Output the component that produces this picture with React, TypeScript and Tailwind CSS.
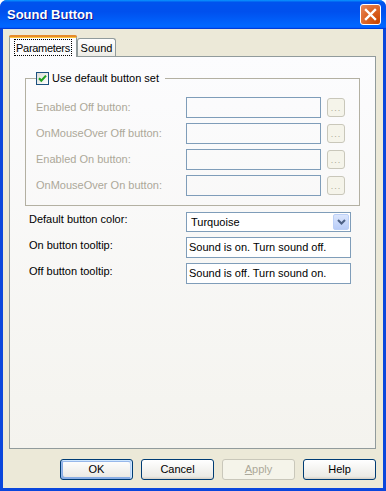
import React from 'react';

const font = "font-['Tahoma','Liberation_Sans',sans-serif]";

function CheckBox() {
  return (
    <span className="inline-flex w-[13px] h-[13px] border border-[#1c5180] bg-[linear-gradient(135deg,#dcdcd7,#ffffff)] items-center justify-center">
      <svg width="11" height="11" viewBox="0 0 11 11">
        <path d="M2 5.2 L4.3 7.6 L9 2.6" fill="none" stroke="#21a121" strokeWidth="2.1" />
      </svg>
    </span>
  );
}

function DisabledRow({ label }: { label: string }) {
  return (
    <>
      <span className="text-[#aca899] self-center leading-[13px]">{label}</span>
      <div className="h-[21px] border border-[#7f9db9]" />
      <div className="mt-[1px] h-[19px] rounded-[3px] border border-[#c9c7ba] bg-[#f5f4ea] flex items-end justify-center pb-[3px]">
        <span className="text-[#aca899] text-[9px] leading-[9px] tracking-[1px]">...</span>
      </div>
    </>
  );
}

function Button({ label, def, disabled }: { label: React.ReactNode; def?: boolean; disabled?: boolean }) {
  let cls = 'w-[73px] h-[21px] rounded-[3px] border flex items-center justify-center ';
  if (disabled) cls += 'border-[#c9c7ba] bg-[#f5f4ea] text-[#aca899]';
  else
    cls +=
      'border-[#003c74] text-black bg-[linear-gradient(180deg,#ffffff,#ecebe6_86%,#d6d0c5)]' +
      (def ? ' shadow-[inset_-1px_1px_#cee7ff,inset_1px_2px_#98b8ea,inset_-2px_2px_#bcd4f6,inset_1px_-1px_#89ade4,inset_2px_-2px_#89ade4]' : '');
  return <div className={cls}>{label}</div>;
}

export default function App() {
  return (
    <div className={`w-[386px] h-[491px] flex flex-col rounded-t-[7px] overflow-hidden bg-[#0a46dc] text-[11px] ${font}`}>
      {/* Title bar */}
      <div className="h-[29px] shrink-0 flex items-center justify-between pl-[7px] pr-[5px] bg-[linear-gradient(180deg,#0997ff,#0053ee_8%,#0050ee_40%,#0066ff_88%,#0066ff_93%,#005bff_95%,#003dd7_96%,#003dd7)]">
        <span className="text-white font-bold text-[13px] pt-[1px] font-['Liberation_Sans',sans-serif] [text-shadow:1px_1px_#0f1089]">
          Sound Button
        </span>
        <div className="w-[21px] h-[21px] rounded-[3px] border border-white bg-[radial-gradient(circle_at_90%_90%,#cc4600,#dc6527_55%,#e88a5f)] flex items-center justify-center">
          <svg width="13" height="13" viewBox="0 0 13 13">
            <path d="M2 2 L11 11 M11 2 L2 11" stroke="#fff" strokeWidth="2.4" strokeLinecap="square" />
          </svg>
        </div>
      </div>

      {/* Client area */}
      <div className="flex-1 mx-[3px] mb-[3px] bg-[#ece9d8] flex flex-col">
        <div className="pt-[6px] pl-[6px] pr-[7px] flex flex-col flex-1">
          {/* Tabs */}
          <div className="flex items-end h-[21px] relative z-10">
            <div className="w-[68px] h-[22px] -mb-px rounded-t-[3px] border-x border-[#919b9c] bg-[#fcfcfe] flex flex-col">
              <div className="h-[2px] -mx-px rounded-t-[3px] bg-[#e68b2c]" />
              <div className="h-px bg-[#ffc73c]" />
              <div className="flex-1 flex items-start justify-center pt-[1px]">
                <span className="border border-dotted border-black px-px tracking-[-0.3px] leading-[14px] h-[17px] flex items-center">
                  Parameters
                </span>
              </div>
            </div>
            <div className="w-[39px] h-[18px] rounded-t-[3px] border border-b-0 border-[#919b9c] bg-[linear-gradient(180deg,#ffffff,#f3f3ef_70%,#ecebe5)] flex items-center justify-center pt-[2px]">
              Sound
            </div>
          </div>

          {/* Panel */}
          <div className="flex-1 border border-[#919b9c] bg-[linear-gradient(180deg,#fcfcfe,#f4f3ee)] flex flex-col pl-[15px]">
            <fieldset className="mt-[15px] w-[335px] border border-[#b3b0a2] pl-[10px] pt-[12px] pb-[9px]">
              <legend className="pr-[6px] flex items-center gap-[3px] h-[13px] leading-[13px] text-black">
                <CheckBox />
                <span>Use default button set</span>
              </legend>
              <div className="grid grid-cols-[144px_135px_18px] gap-x-[6px] gap-y-[5px]">
                <DisabledRow label="Enabled Off button:" />
                <DisabledRow label="OnMouseOver Off button:" />
                <DisabledRow label="Enabled On button:" />
                <DisabledRow label="OnMouseOver On button:" />
              </div>
            </fieldset>

            <div className="mt-[6px] pl-[4px] flex flex-col gap-[5px]">
              <div className="flex items-start">
                <span className="w-[157px] leading-[13px] pt-[1px]">Default button color:</span>
                <div className="w-[165px] h-[20px] border border-[#7f9db9] bg-white flex items-center justify-between pl-[4px] pr-px">
                  <span>Turquoise</span>
                  <div className="w-[16px] h-[16px] rounded-[2px] border border-[#bcd0f7] bg-[linear-gradient(180deg,#dbe6fd,#b9cdf8)] flex items-center justify-center">
                    <svg width="9" height="6" viewBox="0 0 9 6">
                      <path d="M1 1 L4.5 4.5 L8 1" fill="none" stroke="#4d6185" strokeWidth="2" />
                    </svg>
                  </div>
                </div>
              </div>
              <div className="flex items-start">
                <span className="w-[157px] leading-[13px] pt-[2px]">On button tooltip:</span>
                <div className="w-[165px] h-[21px] border border-[#7f9db9] bg-white flex items-center pl-[2px]">
                  Sound is on. Turn sound off.
                </div>
              </div>
              <div className="flex items-start">
                <span className="w-[157px] leading-[13px] pt-[2px]">Off button tooltip:</span>
                <div className="w-[165px] h-[21px] border border-[#7f9db9] bg-white flex items-center pl-[2px]">
                  Sound is off. Turn sound on.
                </div>
              </div>
            </div>
          </div>
        </div>

        {/* Buttons */}
        <div className="h-[39px] shrink-0 flex justify-end items-start gap-[8px] pt-[10px] pr-[7px]">
          <Button label="OK" def />
          <Button label="Cancel" />
          <Button label={<span><span className="underline">A</span>pply</span>} disabled />
          <Button label="Help" />
        </div>
      </div>
    </div>
  );
}
